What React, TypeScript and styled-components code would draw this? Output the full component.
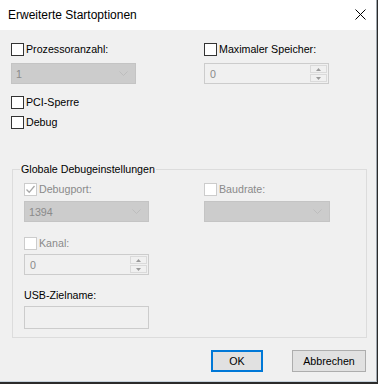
import React from 'react'
import styled, { createGlobalStyle } from 'styled-components'

const GlobalStyle = createGlobalStyle`
  html, body {
    margin: 0;
    padding: 0;
    background: #2b2b2b;
  }
  body {
    font-family: "Liberation Sans", Arial, sans-serif;
    font-size: 10.67px;
    color: #000;
  }
`

const Chevron: React.FC = () => (
  <svg width="9" height="5" viewBox="0 0 9 5">
    <polyline points="0.5,0.5 4.5,4.5 8.5,0.5" fill="none" stroke="#bdbdbd" strokeWidth="1" />
  </svg>
)

const CheckMark: React.FC = () => (
  <svg width="11" height="11" viewBox="0 0 11 11">
    <polyline points="1.5,5.5 4.2,8.3 9.5,2" fill="none" stroke="#a8a8a8" strokeWidth="1.3" />
  </svg>
)

const Arrow: React.FC<{ up?: boolean }> = ({ up }) => (
  <svg width="5" height="3" viewBox="0 0 5 3">
    <polygon points={up ? '0,3 2.5,0 5,3' : '0,0 5,0 2.5,3'} fill="#9a9a9a" />
  </svg>
)

type CheckProps = { label: string; disabled?: boolean; checked?: boolean }

const Check: React.FC<CheckProps> = ({ label, disabled, checked }) => (
  <CheckRow $disabled={disabled}>
    <Box $disabled={disabled}>{checked && <CheckMark />}</Box>
    <span>{label}</span>
  </CheckRow>
)

const Combo: React.FC<{ value?: string; $wide?: boolean }> = ({ value, $wide }) => (
  <ComboBox $wide={$wide}>
    <span>{value}</span>
    <Chevron />
  </ComboBox>
)

const Spinner: React.FC<{ value: string }> = ({ value }) => (
  <SpinBox>
    <SpinText>{value}</SpinText>
    <SpinButtons>
      <SpinButton><Arrow up /></SpinButton>
      <SpinButton><Arrow /></SpinButton>
    </SpinButtons>
  </SpinBox>
)

const App: React.FC = () => {
  return (
    <>
      <GlobalStyle />
      <Window>
        <TitleBar>
          <Title>Erweiterte Startoptionen</Title>
          <CloseIcon width="11" height="11" viewBox="0 0 11 11">
            <line x1="0.5" y1="0.5" x2="10.5" y2="10.5" stroke="#000" strokeWidth="1" />
            <line x1="10.5" y1="0.5" x2="0.5" y2="10.5" stroke="#000" strokeWidth="1" />
          </CloseIcon>
        </TitleBar>
        <Body>
          <TopGrid>
            <Check label="Prozessoranzahl:" />
            <Check label="Maximaler Speicher:" />
            <Combo value="1" />
            <Spinner value="0" />
          </TopGrid>
          <Flags>
            <Check label="PCI-Sperre" />
            <Check label="Debug" />
          </Flags>
          <Group>
            <Legend>Globale Debugeinstellungen</Legend>
            <GroupGrid>
              <Check label="Debugport:" disabled checked />
              <Check label="Baudrate:" disabled />
              <Combo value="1394" />
              <Combo $wide />
            </GroupGrid>
            <Stack>
              <Check label="Kanal:" disabled />
              <SpinSlot>
                <Spinner value="0" />
              </SpinSlot>
              <FieldLabel>USB-Zielname:</FieldLabel>
              <TextField />
            </Stack>
          </Group>
          <Buttons>
            <Button $primary>OK</Button>
            <Button>Abbrechen</Button>
          </Buttons>
        </Body>
      </Window>
    </>
  )
}

export default App

const Window = styled.div`
  width: 376px;
  height: 381px;
  background: #f0f0f0;
  border-right: 1px solid #9fa7ae;
  border-bottom: 1px solid #c6d2dc;
  display: flex;
  flex-direction: column;
`

const TitleBar = styled.div`
  height: 30px;
  background: #fff;
  display: flex;
  align-items: center;
  justify-content: space-between;
  padding: 0 10px 0 8px;
  flex-shrink: 0;
`

const Title = styled.div`
  font-size: 12px;
  padding-bottom: 1px;
`

const CloseIcon = styled.svg`
  margin-top: -2px;
`

const Body = styled.div`
  flex: 1;
  padding: 13px 0 0 11px;
  display: flex;
  flex-direction: column;
`

const TopGrid = styled.div`
  display: grid;
  grid-template-columns: 193px 125px;
  row-gap: 7px;
`

const Flags = styled.div`
  display: flex;
  flex-direction: column;
  gap: 7px;
  margin-top: 12px;
`

const CheckRow = styled.label<{ $disabled?: boolean }>`
  display: flex;
  align-items: center;
  gap: 2px;
  height: 13px;
  line-height: 13px;
  color: ${({ $disabled }) => ($disabled ? '#8a8a8a' : '#000')};
  white-space: nowrap;
`

const Box = styled.span<{ $disabled?: boolean }>`
  width: 13px;
  height: 13px;
  box-sizing: border-box;
  border: 1px solid ${({ $disabled }) => ($disabled ? '#cccccc' : '#333333')};
  background: #fff;
  display: flex;
  align-items: center;
  justify-content: center;
  flex-shrink: 0;
`

const ComboBox = styled.div<{ $wide?: boolean }>`
  width: ${({ $wide }) => ($wide ? '126px' : '125px')};
  height: 21px;
  box-sizing: border-box;
  background: #cccccc;
  border: 1px solid #c4c4c4;
  color: #8a8a8a;
  display: flex;
  align-items: center;
  justify-content: space-between;
  padding: 0 7px 0 4px;
`

const SpinSlot = styled.div`
  margin-top: 4px;
`

const SpinBox = styled.div`
  width: 125px;
  height: 21px;
  box-sizing: border-box;
  border: 1px solid #cccccc;
  background: #f0f0f0;
  display: flex;
  align-items: stretch;
`

const SpinText = styled.div`
  flex: 1;
  color: #8a8a8a;
  padding-left: 5px;
  display: flex;
  align-items: center;
`

const SpinButtons = styled.div`
  width: 17px;
  display: flex;
  flex-direction: column;
  gap: 1px;
  padding: 1px 1px 1px 0;
`

const SpinButton = styled.div`
  flex: 1;
  border: 1px solid #dadada;
  display: flex;
  align-items: center;
  justify-content: center;
`

const Group = styled.div`
  margin-top: 40px;
  margin-left: 1px;
  width: 355px;
  height: 169px;
  box-sizing: border-box;
  border: 1px solid #dcdcdc;
  padding: 13px 0 0 11px;
  position: relative;
`

const Legend = styled.div`
  position: absolute;
  top: -8px;
  left: 7px;
  padding: 0 1px;
  background: #f0f0f0;
  line-height: 14px;
`

const GroupGrid = styled.div`
  display: grid;
  grid-template-columns: 180px 126px;
  row-gap: 5px;
`

const Stack = styled.div`
  display: flex;
  flex-direction: column;
  align-items: flex-start;
  margin-top: 15px;
`

const FieldLabel = styled.div`
  margin-top: 14px;
  line-height: 12px;
`

const TextField = styled.div`
  width: 125px;
  height: 23px;
  box-sizing: border-box;
  border: 1px solid #cccccc;
  background: #f0f0f0;
  margin-top: 5px;
`

const Buttons = styled.div`
  display: flex;
  justify-content: flex-end;
  gap: 29px;
  margin-top: 12px;
  padding-right: 10px;
`

const Button = styled.button<{ $primary?: boolean }>`
  font-family: inherit;
  font-size: 10.67px;
  height: 22px;
  width: ${({ $primary }) => ($primary ? '52px' : '74px')};
  background: #e1e1e1;
  border: 1px solid ${({ $primary }) => ($primary ? '#0078d7' : '#adadad')};
  box-shadow: ${({ $primary }) => ($primary ? 'inset 0 0 0 1px #0078d7' : 'none')};
  color: #000;
  padding: 0;
`
